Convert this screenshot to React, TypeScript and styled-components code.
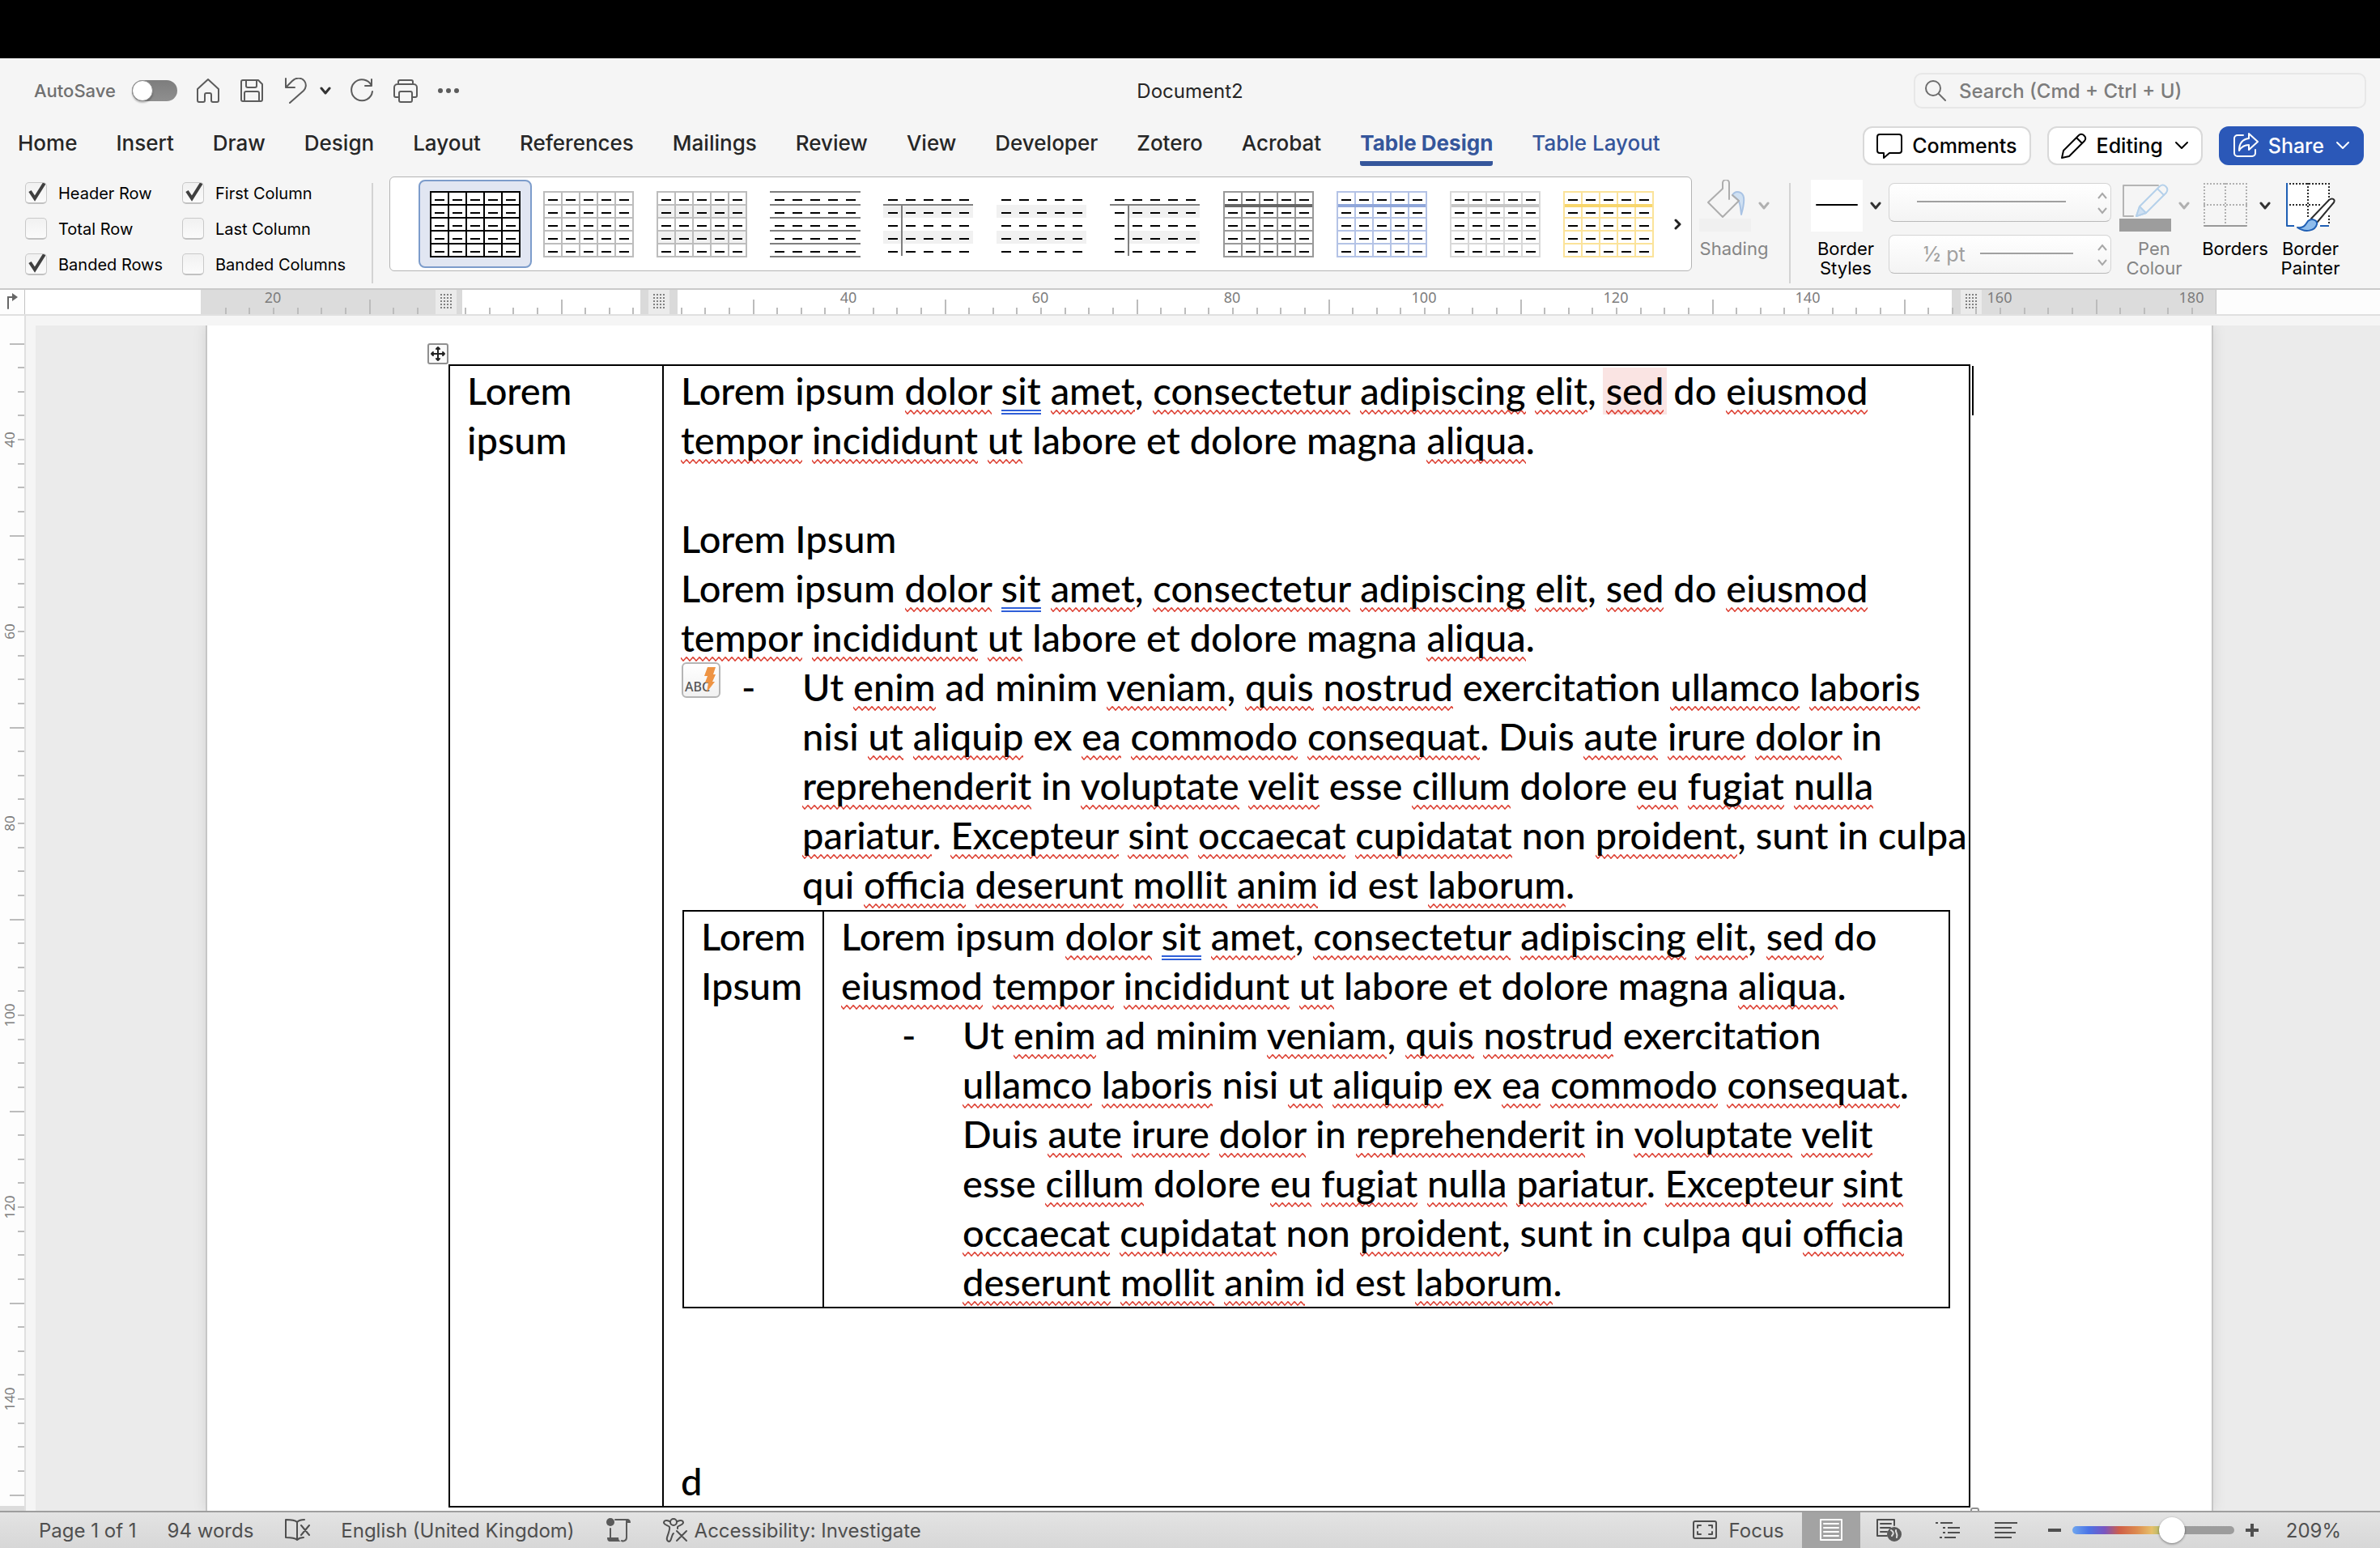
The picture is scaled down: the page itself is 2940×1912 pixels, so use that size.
import React from "react";
import styled, { createGlobalStyle, css } from "styled-components";

const UI = `Inter, Roboto, "Liberation Sans", sans-serif`;
const DOC = `Lato, "Open Sans", "Liberation Sans", sans-serif`;
const BLUE = "#35569b";
const LINE = 61;

const Global = createGlobalStyle`
  *, *::before, *::after { box-sizing: border-box; }
  body { margin: 0; background: #f5f5f5; font-family: ${UI}; }
  button, input, select { font: inherit; color: inherit; margin: 0; }
  button { border: 0; padding: 0; background: none; }
`;

const Window = styled.div`
  display: flex;
  flex-direction: column;
  height: 100vh;
  overflow: hidden;
  color: #1f1f1f;
`;

const ScreenEdge = styled.div`
  flex: none;
  height: 72px;
  background: #000;
`;

/* ---------- title bar ---------- */

const TitleBar = styled.header`
  flex: none;
  display: grid;
  grid-template-columns: 1fr auto 1fr;
  align-items: center;
  height: 80px;
  padding: 0 17px;
  font-size: 23px;
`;

const QuickAccess = styled.div`
  display: flex;
  align-items: center;
  gap: 22px;
  padding-left: 25px;
  color: #5c5c5c;
`;

const AutoSave = styled.label`
  display: flex;
  align-items: center;
  gap: 20px;
  font-size: 22px;
  font-weight: 500;
  color: #707070;
`;

const Toggle = styled.input`
  appearance: none;
  display: flex;
  width: 56px;
  height: 26px;
  border-radius: 13px;
  background: linear-gradient(#7d7d7d, #8f8f8f);
  &::before {
    content: "";
    width: 26px;
    height: 26px;
    border-radius: 50%;
    border: 1px solid #8a8a8a;
    background: #fff;
    box-shadow: 0 2px 2px rgba(0, 0, 0, 0.25);
  }
`;

const IconButton = styled.button`
  display: flex;
  align-items: center;
`;

const Pair = styled.div`
  display: flex;
  align-items: center;
  gap: 14px;
`;

const DocTitle = styled.h1`
  margin: 0;
  font-size: 24px;
  font-weight: 400;
  color: #262626;
`;

const SearchBox = styled.label`
  justify-self: end;
  display: flex;
  align-items: center;
  gap: 14px;
  width: 559px;
  height: 44px;
  padding: 0 12px;
  border: 2px solid #e7e7e7;
  border-radius: 10px;
  color: #6d6d6d;
`;

const SearchInput = styled.input`
  flex: 1;
  border: 0;
  outline: 0;
  background: none;
  font-size: 24px;
  font-weight: 500;
  &::placeholder { color: #7c7c7c; opacity: 1; }
`;

/* ---------- tabs ---------- */

const TabBar = styled.div`
  flex: none;
  display: flex;
  align-items: center;
  justify-content: space-between;
  height: 56px;
  padding: 0 20px 0 22px;
`;

const Tabs = styled.nav`
  display: flex;
  gap: 48px;
`;

const Tab = styled.button<{ $tone?: "context" | "active" }>`
  height: 50px;
  padding-bottom: 2px;
  border-bottom: 6px solid transparent;
  font-size: 26px;
  font-weight: ${(p) => (p.$tone === "active" ? 700 : 500)};
  color: ${(p) => (p.$tone ? BLUE : "#262626")};
  ${(p) =>
    p.$tone === "active" &&
    css`
      background: linear-gradient(${BLUE}, ${BLUE}) bottom / 100% 6px no-repeat border-box;
      border-radius: 3px;
    `}
`;

const Actions = styled.div`
  display: flex;
  gap: 20px;
`;

const ActionButton = styled.button<{ $primary?: boolean }>`
  display: flex;
  align-items: center;
  gap: 12px;
  height: 48px;
  padding: 0 15px;
  border: 2px solid ${(p) => (p.$primary ? "#2b58b8" : "#d9d9d9")};
  border-radius: 12px;
  background: ${(p) => (p.$primary ? "#2b58b8" : "#fff")};
  color: ${(p) => (p.$primary ? "#fff" : "#000")};
  font-size: 25px;
  font-weight: 500;
`;

/* ---------- ribbon ---------- */

const Ribbon = styled.section`
  flex: none;
  display: flex;
  align-items: flex-start;
  height: 150px;
  padding: 8px 50px 0 31px;
  border-bottom: 2px solid #cacaca;
`;

const Options = styled.div`
  display: grid;
  grid-template-columns: 194px 234px;
  grid-auto-rows: 44px;
`;

const Option = styled.label`
  display: flex;
  align-items: center;
  gap: 14px;
  padding-top: 1px;
  font-size: 20px;
  color: #000;
`;

const tick = `url("data:image/svg+xml,%3Csvg xmlns='http://www.w3.org/2000/svg' viewBox='0 0 27 27'%3E%3Cpath d='M6 11l6 9L24 1' fill='none' stroke='%23404040' stroke-width='4'/%3E%3C/svg%3E")`;

const Check = styled.input`
  appearance: none;
  width: 27px;
  height: 27px;
  border: 1px solid #c9c9c9;
  border-bottom: 2px solid #c2c2c2;
  border-radius: 5px;
  background: linear-gradient(#f1f1f1, #fbfbfb);
  &:checked { background: ${tick} center / 27px 27px no-repeat border-box, linear-gradient(#f1f1f1, #fbfbfb); }
`;

const Divider = styled.div`
  flex: none;
  width: 2px;
  height: 124px;
  margin-top: 10px;
  background: #d3d3d3;
`;

const Gallery = styled.div`
  flex: 1;
  display: flex;
  align-items: center;
  height: 117px;
  margin: 2px 9px 0 20px;
  padding-left: 35px;
  overflow: hidden;
  border: 1px solid #b4b4b4;
  border-radius: 6px;
  background: #fff;
`;

const StyleButton = styled.button<{ $selected?: boolean }>`
  flex: none;
  display: grid;
  place-items: center;
  width: 140px;
  height: 109px;
  border-radius: 8px;
  ${(p) =>
    p.$selected &&
    css`
      border: 2px solid #7c9ccb;
      background: #e1e6f2;
    `}
`;

const GalleryMore = styled.button`
  flex: 1;
  display: flex;
  justify-content: center;
`;

const ToolRow = styled.div<{ $gap: number }>`
  flex: none;
  display: flex;
  align-items: flex-start;
  gap: ${(p) => p.$gap}px;
`;

const ToolButton = styled.button<{ $dim?: boolean; $plain?: boolean }>`
  display: flex;
  flex-direction: column;
  align-items: center;
  gap: 9px;
  width: ${(p) => (p.$plain ? 72 : 86)}px;
  padding-top: 6px;
  font-size: 22px;
  line-height: 24px;
  color: ${(p) => (p.$dim ? "#858585" : "#000")};
`;

const ToolIcon = styled.span`
  display: flex;
  align-items: center;
  gap: 9px;
`;

const Fields = styled.div`
  display: grid;
  gap: 16px;
  width: 275px;
  padding-top: 10px;
`;

const Field = styled.label`
  display: grid;
  height: 48px;
  border: 1px solid #d4d4d4;
  border-bottom-color: #b9b9b9;
  border-radius: 7px;
  background: linear-gradient(#fff, #f4f4f4);
  & > * { grid-area: 1 / 1; }
  & > svg { pointer-events: none; }
`;

const FieldSelect = styled.select`
  appearance: none;
  width: 100%;
  height: 100%;
  padding: 0 42px;
  border: 0;
  background: none;
  font-size: 25px;
  color: #a0a0a0;
`;

/* ---------- rulers and canvas ---------- */

const Ruler = styled.div`
  flex: none;
  display: flex;
  position: relative;
  height: 32px;
  border-bottom: 2px solid #e0e0e0;
  background: #fdfdfd;
`;

const RulerPart = styled.div<{ $w: number; $bg: string; $edge?: boolean }>`
  flex: none;
  width: ${(p) => p.$w}px;
  background: ${(p) => p.$bg};
  border-right: ${(p) => (p.$edge ? "1px solid #c4c4c4" : "0")};
`;

const Grip = styled.div`
  flex: none;
  display: grid;
  place-items: center;
  width: 26px;
  background: #ebebeb;
`;

const RulerScale = styled.svg`
  position: absolute;
  left: 0;
  top: 0;
  overflow: visible;
  font-family: "Noto Sans", "DejaVu Sans", sans-serif;
  font-size: 18px;
`;

const Workspace = styled.main`
  flex: 1;
  min-height: 0;
  display: flex;
`;

const SideRuler = styled.div`
  flex: none;
  width: 32px;
  border-right: 2px solid #e0e0e0;
  background: linear-gradient(#fdfdfd, #fdfdfd) top / 100% calc(100% - 6px) no-repeat, #dcdcdc;
  font-family: "Noto Sans", "DejaVu Sans", sans-serif;
  font-size: 17px;
  overflow: hidden;
`;

const Canvas = styled.div`
  flex: 1;
  display: flex;
  justify-content: center;
  margin: 12px 0 0 12px;
  padding-left: 4px;
  overflow: hidden;
  background: #ebebeb;
`;

const Page = styled.article`
  flex: none;
  width: 2480px;
  padding: 48px 0 0 298px;
  border: 2px solid #c6c6c6;
  border-width: 0 2px;
  background: #fff;
  box-shadow: 0 0 16px rgba(0, 0, 0, 0.1);
`;

const TableFrame = styled.div`
  position: relative;
  width: 1880px;
`;

const DocTable = styled.table`
  width: 100%;
  table-layout: fixed;
  border-collapse: collapse;
  font-family: ${DOC};
  font-size: 47px;
  font-weight: 500;
  line-height: ${LINE}px;
  color: #000;
`;

const NestedFrame = styled.div`
  width: 1566px;
  margin: 1px 0 0 2px;
`;

const Cell = styled.td`
  padding: 0 0 0 21px;
  border: 2px solid #000;
  vertical-align: top;
  white-space: nowrap;
`;

const Line = styled.p`
  margin: 0;
  min-height: ${LINE}px;
`;

const List = styled.ul`
  margin: 0;
  padding: 0;
  list-style: none;
`;

const Item = styled.li`
  position: relative;
  display: flex;
`;

const Dash = styled.span`
  flex: none;
  width: 150px;
  padding-left: 75px;
`;

const wave = `url("data:image/svg+xml,%3Csvg xmlns='http://www.w3.org/2000/svg' width='8' height='6'%3E%3Cpath d='M-1 0.5L3 5.2L7 0.8L9 3.2' fill='none' stroke='%23dc3a2c' stroke-width='1.5'/%3E%3C/svg%3E")`;

const Misspelt = styled.span<{ $spoken?: boolean }>`
  padding-bottom: 2px;
  background: ${wave} left bottom / 8px 6px repeat-x;
  ${(p) => p.$spoken && css`box-shadow: -4px 0 #fae4e3, 4px 0 #fae4e3; background-color: #fae4e3;`}
`;

const Grammar = styled.span`
  padding-bottom: 2px;
  background: linear-gradient(#2f5fd8 0 2px, transparent 2px 4px, #2f5fd8 4px 6px) left bottom / 100% 6px no-repeat;
`;

const MoveHandle = styled.button`
  position: absolute;
  left: -26px;
  top: -26px;
  width: 26px;
  height: 26px;
  display: grid;
  place-items: center;
  border: 2px solid #8f8f8f;
  border-radius: 3px;
  background: #fafafa;
`;

const ResizeHandle = styled.span`
  position: absolute;
  left: 100%;
  top: 100%;
  width: 11px;
  height: 11px;
  border: 2px solid #8f8f8f;
  border-radius: 3px;
  background: #fff;
`;

const Caret = styled.span`
  position: absolute;
  right: -4px;
  top: 2px;
  width: 2px;
  height: ${LINE}px;
  background: #000;
`;

const AutoCorrect = styled.button`
  position: absolute;
  left: 1px;
  top: 0;
  width: 48px;
  height: 44px;
  border: 2px solid #b5b5b5;
  border-radius: 6px;
  background: linear-gradient(#fff, #f1f1f1);
  line-height: 0;
`;

/* ---------- status bar ---------- */

const StatusBar = styled.footer`
  flex: none;
  display: flex;
  justify-content: space-between;
  height: 46px;
  padding: 0 48px;
  border-top: 2px solid #9e9e9e;
  background: linear-gradient(#e3e3e3, #d7d7d7);
  font-size: 24px;
  color: #4f4f4f;
`;

const StatusSide = styled.div<{ $gap: number }>`
  display: flex;
  align-items: center;
  gap: ${(p) => p.$gap}px;
`;

const StatusButton = styled.button`
  display: flex;
  align-items: center;
  gap: 8px;
`;

const ViewButton = styled.button<{ $on?: boolean }>`
  display: grid;
  place-items: center;
  width: 72px;
  height: 44px;
  background: ${(p) => (p.$on ? "#a3a3a3" : "none")};
`;

const Zoom = styled.input`
  appearance: none;
  width: 200px;
  height: 32px;
  background: none;
  &::-webkit-slider-runnable-track {
    height: 10px;
    border-radius: 5px;
    background: linear-gradient(90deg, #6fa6ee 0, #4b74e6 20px, #7a55c0 40px, #cf5f48 58px, #dd8c50 80px, #e6bf6a 98px, #8fb86a 116px, #9c9c9c 117px);
  }
  &::-webkit-slider-thumb {
    appearance: none;
    width: 32px;
    height: 32px;
    margin-top: -11px;
    border-radius: 50%;
    background: #fff;
    box-shadow: 0 1px 3px rgba(0, 0, 0, 0.45);
  }
`;

/* ---------- drawings ---------- */

type G = { w?: number; h?: number; sw?: number; color?: string; children: React.ReactNode };
const Glyph = ({ w = 32, h = 32, sw = 2, color = "currentColor", children }: G) => (
  <svg width={w} height={h} viewBox={`0 0 ${w} ${h}`} fill="none" stroke={color} strokeWidth={sw} strokeLinecap="round" strokeLinejoin="round" aria-hidden="true">
    {children}
  </svg>
);

const Chevron = ({ color = "#333", sw = 3 }: { color?: string; sw?: number }) => (
  <Glyph w={14} h={12} sw={sw} color={color}><path d="M2 3l5 6 5-6" /></Glyph>
);

type Look = { line: string; head?: string; mode?: "grid" | "rows" | "head" | "none"; band?: boolean; col?: boolean };

const Thumb = ({ line, head, mode = "grid", band, col }: Look) => {
  const steps = [0, 1, 2, 3, 4, 5];
  const x0 = col ? 23 : 0;
  return (
    <svg width="112" height="82" viewBox="0 0 112 82" aria-hidden="true">
      {mode !== "none" && mode !== "head" && <rect width="112" height="82" fill="#fff" />}
      {band && [17, 49].map((y) => <rect key={y} x={x0} y={y} width={111 - x0} height="16" fill="#f1f1f1" />)}
      {(mode === "grid" || mode === "rows") &&
        steps.map((i) => <path key={i} d={`M0 ${1 + 16 * i}H112`} stroke={line} strokeWidth="2" />)}
      {mode === "grid" && steps.map((i) => <path key={i} d={`M${1 + 22 * i} 0V82`} stroke={line} strokeWidth="2" />)}
      {mode === "grid" && head && <path d="M2 18H110" stroke={head} strokeWidth="4" />}
      {mode === "head" && <path d="M0 17H111M23 17V80" stroke={line} strokeWidth="2" />}
      {[11, 27, 43, 59, 75].map((y) => (
        <path key={y} d={`M6 ${y}H106`} stroke="#000" strokeWidth="2" strokeDasharray="12 10" />
      ))}
    </svg>
  );
};

const looks: Look[] = [
  { line: "#000" },
  { line: "#bdbdbd" },
  { line: "#bdbdbd", band: true },
  { line: "#7f7f7f", mode: "rows" },
  { line: "#7f7f7f", mode: "head", band: true },
  { line: "#7f7f7f", mode: "none", band: true },
  { line: "#7f7f7f", mode: "head", band: true, col: true },
  { line: "#999", head: "#666" },
  { line: "#b4c3e6", head: "#8fa6da" },
  { line: "#d9d9d9", head: "#c6c6c6" },
  { line: "#fbe39a", head: "#f8d66c" },
];

const range = (a: number, b: number) => Array.from({ length: b - a + 1 }, (_, i) => a + i);
const MM20 = 237;

const HorizontalScale = () => (
  <RulerScale width="2760" height="30" aria-hidden="true">
    {range(-10, 72)
      .filter((k) => k < -1 || (k > -1 && k < 8) || k > 8)
      .map((k) => {
        const x = Math.round(575 + (k * MM20) / 8);
        const long = Math.abs(k % 8) === 4;
        return <path key={k} d={`M${x} ${long ? 12 : 22}V30`} stroke="#bcbcbc" strokeWidth="2" />;
      })}
    {[-1, 2, 3, 4, 5, 6, 7, 8, 9].map((n) => (
      <text key={n} x={574 + n * MM20} y="16" textAnchor="middle" fill="#7d7d7d">{Math.abs(n) * 20}</text>
    ))}
  </RulerScale>
);

const VerticalScale = () => (
  <svg width="30" height="1500" aria-hidden="true">
    {range(12, 60).map((k) => {
      const y = Math.round(69 + (k * MM20) / 8) - 390;
      return <path key={k} d={`M${k % 8 === 4 ? 12 : 22} ${y}H30`} stroke="#bcbcbc" strokeWidth="2" />;
    })}
    {[2, 3, 4, 5, 6, 7].map((n) => {
      const y = 69 + n * MM20 - 390;
      return <text key={n} x="18" y={y} transform={`rotate(-90 18 ${y})`} textAnchor="middle" fill="#7d7d7d">{n * 20}</text>;
    })}
  </svg>
);

const GripDots = () => (
  <svg width="16" height="20" aria-hidden="true">
    {[1, 5, 9, 13, 17].map((y) => <path key={y} d={`M1 ${y}H15`} stroke="#808080" strokeWidth="2" strokeDasharray="2 2" />)}
  </svg>
);

const Spinner = ({ from, to }: { from: number; to: number }) => (
  <svg width="273" height="46" fill="none" strokeWidth="2" aria-hidden="true">
    <path d={`M${from} 22H${to}`} stroke="#a0a0a0" />
    <path d="M258 18l5-6 5 6M258 30l5 6 5-6" stroke="#a8a8a8" />
  </svg>
);

/* ---------- document text ---------- */

/* ~word~ is a spelling mark, =word= a grammar mark, ^word^ the word in focus */
const marked = (text: string) =>
  text.split(/(~[^~]+~|=[^=]+=|\^[^^]+\^)/).map((part, i) => {
    const word = part.slice(1, -1);
    if (part[0] === "~") return <Misspelt key={i}>{word}</Misspelt>;
    if (part[0] === "^") return <Misspelt key={i} $spoken>{word}</Misspelt>;
    if (part[0] === "=") return <Grammar key={i}>{word}</Grammar>;
    return part;
  });

const Lines = ({ rows }: { rows: string[] }) => <>{rows.map((r, i) => <Line key={i}>{marked(r)}</Line>)}</>;

const LOREM = "~consectetur~ ~adipiscing~ ~elit~,";
const tail = "~tempor~ ~incididunt~ ~ut~ labore et dolore magna ~aliqua~.";

const outerTop = [
  `Lorem ipsum ~dolor~ =sit= ~amet~, ${LOREM} ^sed^ do ~eiusmod~`,
  tail,
  "",
  "Lorem Ipsum",
  `Lorem ipsum ~dolor~ =sit= ~amet~, ${LOREM} ~sed~ do ~eiusmod~`,
  tail,
];
const outerItem = [
  "Ut ~enim~ ad minim ~veniam~, ~quis~ ~nostrud~ exercitation ~ullamco~ ~laboris~",
  "nisi ~ut~ ~aliquip~ ex ~ea~ ~commodo~ ~consequat~. Duis ~aute~ ~irure~ ~dolor~ in",
  "~reprehenderit~ in ~voluptate~ ~velit~ esse ~cillum~ dolore ~eu~ ~fugiat~ ~nulla~",
  "~pariatur~. ~Excepteur~ ~sint~ ~occaecat~ ~cupidatat~ non ~proident~, sunt in culpa",
  "qui ~officia~ ~deserunt~ ~mollit~ ~anim~ id est ~laborum~.",
];
const innerTop = [`Lorem ipsum ~dolor~ =sit= ~amet~, ${LOREM} ~sed~ do`, `~eiusmod~ ${tail}`];
const innerItem = [
  "Ut ~enim~ ad minim ~veniam~, ~quis~ ~nostrud~ exercitation",
  "~ullamco~ ~laboris~ nisi ~ut~ ~aliquip~ ex ~ea~ ~commodo~ ~consequat~.",
  "Duis ~aute~ ~irure~ ~dolor~ in ~reprehenderit~ in ~voluptate~ ~velit~",
  "esse ~cillum~ dolore ~eu~ ~fugiat~ ~nulla~ ~pariatur~. ~Excepteur~ ~sint~",
  "~occaecat~ ~cupidatat~ non ~proident~, sunt in culpa qui ~officia~",
  "~deserunt~ ~mollit~ ~anim~ id est ~laborum~.",
];

const tabs = ["Home", "Insert", "Draw", "Design", "Layout", "References", "Mailings", "Review", "View", "Developer", "Zotero", "Acrobat"];
const options: [string, boolean][] = [
  ["Header Row", true], ["First Column", true],
  ["Total Row", false], ["Last Column", false],
  ["Banded Rows", true], ["Banded Columns", false],
];

export default function App() {
  return (
    <Window>
      <Global />
      <ScreenEdge />
      <TitleBar>
        <QuickAccess>
          <AutoSave>AutoSave<Toggle type="checkbox" role="switch" /></AutoSave>
          <IconButton aria-label="Home">
            <Glyph><path d="M3 14L16 2l13 12v14a2 2 0 0 1-2 2h-5a2 2 0 0 1-2-2v-7a2 2 0 0 0-2-2h-4a2 2 0 0 0-2 2v7a2 2 0 0 1-2 2H5a2 2 0 0 1-2-2z" /></Glyph>
          </IconButton>
          <IconButton aria-label="Save">
            <Glyph><path d="M5 3h19l5 5v19a2 2 0 0 1-2 2H5a2 2 0 0 1-2-2V5a2 2 0 0 1 2-2zM9 3v7a2 2 0 0 0 2 2h9a2 2 0 0 0 2-2V3M7 29V19a2 2 0 0 1 2-2h14a2 2 0 0 1 2 2v10" /></Glyph>
          </IconButton>
          <Pair>
            <IconButton aria-label="Undo">
              <Glyph><path d="M4 1v11h11M4 12l8-8c5-5 12-4 15 0s2 9-1 12L9 31" /></Glyph>
            </IconButton>
            <IconButton aria-label="Undo history"><Chevron /></IconButton>
          </Pair>
          <IconButton aria-label="Redo">
            <Glyph><path d="M28 2v8h-8M28 10A13 13 0 1 0 29 17" /></Glyph>
          </IconButton>
          <IconButton aria-label="Print">
            <Glyph><path d="M8 24H4a2 2 0 0 1-2-2V12a4 4 0 0 1 4-4h20a4 4 0 0 1 4 4v10a2 2 0 0 1-2 2h-4M7 8V5a2 2 0 0 1 2-2h14a2 2 0 0 1 2 2v3M10 17h12a2 2 0 0 1 2 2v9a2 2 0 0 1-2 2H10a2 2 0 0 1-2-2v-9a2 2 0 0 1 2-2z" /></Glyph>
          </IconButton>
          <IconButton aria-label="More">
            <Glyph><g fill="currentColor" stroke="none"><circle cx="5" cy="16" r="3" /><circle cx="15" cy="16" r="3" /><circle cx="25" cy="16" r="3" /></g></Glyph>
          </IconButton>
        </QuickAccess>
        <DocTitle>Document2</DocTitle>
        <SearchBox>
          <Glyph w={26} h={28}><circle cx="10" cy="11" r="9" /><path d="M17 18l8 8" /></Glyph>
          <SearchInput type="search" aria-label="Search" placeholder="Search (Cmd + Ctrl + U)" />
        </SearchBox>
      </TitleBar>

      <TabBar>
        <Tabs>
          {tabs.map((t) => <Tab key={t}>{t}</Tab>)}
          <Tab $tone="active">Table Design</Tab>
          <Tab $tone="context">Table Layout</Tab>
        </Tabs>
        <Actions>
          <ActionButton>
            <Glyph><path d="M4 2h24a3 3 0 0 1 3 3v17a3 3 0 0 1-3 3H16l-7 6v-6H4a3 3 0 0 1-3-3V5a3 3 0 0 1 3-3z" /></Glyph>
            Comments
          </ActionButton>
          <ActionButton>
            <Glyph><path d="M1 31l2-9L22 3a5 5 0 0 1 7 7L10 29zM19 6l7 7" /></Glyph>
            Editing
            <Glyph w={20} h={14}><path d="M4 3l7 7 7-7" /></Glyph>
          </ActionButton>
          <ActionButton $primary>
            <Glyph><path d="M13 3H6a4 4 0 0 0-4 4v18a4 4 0 0 0 4 4h18a4 4 0 0 0 4-4v-4M20 1l11 10-11 10v-6c-6 0-9 2-12 7 0-9 4-14 12-15z" /></Glyph>
            Share
            <Glyph w={20} h={14}><path d="M4 3l7 7 7-7" /></Glyph>
          </ActionButton>
        </Actions>
      </TabBar>

      <Ribbon>
        <Options>
          {options.map(([name, on]) => (
            <Option key={name}><Check type="checkbox" defaultChecked={on} />{name}</Option>
          ))}
        </Options>
        <Divider />
        <Gallery>
          {looks.map((look, i) => (
            <StyleButton key={i} $selected={i === 0} aria-label={`Table style ${i + 1}`}><Thumb {...look} /></StyleButton>
          ))}
          <GalleryMore aria-label="More styles">
            <Glyph w={10} h={16} sw={3} color="#222"><path d="M2 3l5 5-5 5" /></Glyph>
          </GalleryMore>
        </Gallery>
        <ToolRow $gap={25}>
          <ToolButton $dim>
            <ToolIcon>
              <Glyph w={64} h={64} color="#adadad">
                <path d="M0 48h64v16H0z" fill="#f0f0f0" stroke="none" />
                <path d="M41 19c4-7 13-4 14 3 1 7-1 14-3 21-1-8-1-14-4-18z" fill="#cfe0f2" stroke="#a9c3e4" />
                <path d="M37 24V4a4 4 0 0 0-8 0v7L11 28l18 18 20-20-8-7" />
              </Glyph>
              <Chevron color="#b0b0b0" />
            </ToolIcon>
            Shading
          </ToolButton>
          <Divider />
          <ToolRow $gap={10}>
            <ToolButton>
              <ToolIcon>
                <Glyph w={64} h={64} color="#000"><path d="M0 0h64v64H0z" fill="#fff" stroke="none" /><path d="M7 31h50" /></Glyph>
                <Chevron />
              </ToolIcon>
              <span>Border<br />Styles</span>
            </ToolButton>
            <Fields>
              <Field>
                <FieldSelect aria-label="Line style"><option></option></FieldSelect>
                <Spinner from={34} to={218} />
              </Field>
              <Field>
                <FieldSelect aria-label="Line weight"><option>½ pt</option></FieldSelect>
                <Spinner from={112} to={227} />
              </Field>
            </Fields>
            <ToolRow $gap={14}>
              <ToolButton $dim>
                <ToolIcon>
                  <Glyph w={64} h={64} color="#b4b4b4">
                    <path d="M0 48h64v16H0z" fill="#9d9d9d" stroke="none" />
                    <path d="M48 7H5v38h12" />
                    <g stroke="#b4d0ea"><path d="M21 45l4-12L50 8c5-4 12 2 8 8L33 41z" fill="#f5f5f5" /><path d="M21 45l4-12 8 8z" fill="#cfe0f2" /><path d="M47 11l8 8" /></g>
                  </Glyph>
                  <Chevron color="#b0b0b0" />
                </ToolIcon>
                <span>Pen<br />Colour</span>
              </ToolButton>
              <ToolButton>
                <ToolIcon>
                  <Glyph w={64} h={64} color="#b0b0b0">
                    <g strokeDasharray="2 2" strokeLinecap="butt"><path d="M4 5h54M5 4v53M57 4v53M31 4v53M4 31h54" /></g>
                    <path d="M5 57h52" stroke="#999" />
                  </Glyph>
                  <Chevron />
                </ToolIcon>
                Borders
              </ToolButton>
              <ToolButton $plain>
                <ToolIcon>
                  <Glyph w={64} h={64} color="#2b2b2b">
                    <path d="M3 5h52v52H3z" fill="#fff" stroke="none" />
                    <g strokeDasharray="2 2" strokeLinecap="butt"><path d="M6 5h50M55 4v28M55 44v12M29 4v44M6 31h38" /></g>
                    <path d="M3 4v53h9M44 57h11" stroke="#1f5fb4" strokeLinecap="butt" />
                    <path d="M33 48L55 25c4-3 8-1 6 3L40 53z" fill="#fff" />
                    <path d="M16 59c9 1 10-4 13-8 5-4 12-1 11 4-2 8-14 11-24 4z" fill="#8ebcec" stroke="#1f5fb4" />
                  </Glyph>
                </ToolIcon>
                <span>Border<br />Painter</span>
              </ToolButton>
            </ToolRow>
          </ToolRow>
        </ToolRow>
      </Ribbon>

      <Ruler>
        <RulerPart $w={31} $bg="#fdfdfd" $edge>
          <Glyph w={30} h={30} color="#666"><path d="M10 23V9h8" strokeLinejoin="miter" /><path d="M15 4l7 5-7 5z" fill="#666" stroke="none" /></Glyph>
        </RulerPart>
        <RulerPart $w={217} $bg="#fff" />
        <RulerPart $w={290} $bg="#dcdcdc" />
        <Grip><GripDots /></Grip>
        <RulerPart $w={7} $bg="#dadada" />
        <RulerPart $w={220} $bg="#fff" />
        <RulerPart $w={10} $bg="#dadada" />
        <Grip><GripDots /></Grip>
        <RulerPart $w={10} $bg="#dadada" />
        <RulerPart $w={1574} $bg="#fff" />
        <RulerPart $w={11} $bg="#dadada" />
        <Grip><GripDots /></Grip>
        <RulerPart $w={290} $bg="#dcdcdc" $edge />
        <HorizontalScale />
      </Ruler>

      <Workspace>
        <SideRuler><VerticalScale /></SideRuler>
        <Canvas>
          <Page>
            <TableFrame>
              <MoveHandle aria-label="Move table">
                <Glyph w={20} h={20} color="#222"><path d="M10 2v16M2 10h16M8 4l2-2 2 2M8 16l2 2 2-2M4 8l-2 2 2 2M16 8l2 2-2 2" /></Glyph>
              </MoveHandle>
              <DocTable>
                <colgroup><col width="264" /><col /></colgroup>
                <tbody>
                  <tr>
                    <Cell><Lines rows={["Lorem", "ipsum"]} /></Cell>
                    <Cell>
                      <Lines rows={outerTop} />
                      <List>
                        <Item>
                          <AutoCorrect aria-label="AutoCorrect options">
                            <svg width="44" height="40" aria-hidden="true">
                              <text x="2" y="34" fontFamily="Noto Sans" fontSize="16" fill="#555">ABC</text>
                              <path d="M30 4h10l-3 9h3l-4 9h3l-10 13 2-12h-4l3-8h-4z" fill="#ee9444" />
                            </svg>
                          </AutoCorrect>
                          <Dash>-</Dash>
                          <div><Lines rows={outerItem} /></div>
                        </Item>
                      </List>
                      <NestedFrame>
                        <DocTable>
                          <colgroup><col width="173" /><col /></colgroup>
                          <tbody>
                            <tr>
                              <Cell><Lines rows={["Lorem", "Ipsum"]} /></Cell>
                              <Cell>
                                <Lines rows={innerTop} />
                                <List><Item><Dash>-</Dash><div><Lines rows={innerItem} /></div></Item></List>
                              </Cell>
                            </tr>
                          </tbody>
                        </DocTable>
                      </NestedFrame>
                      <Lines rows={["", "", "", "d"]} />
                    </Cell>
                  </tr>
                </tbody>
              </DocTable>
              <Caret />
              <ResizeHandle />
            </TableFrame>
          </Page>
        </Canvas>
      </Workspace>

      <StatusBar>
        <StatusSide $gap={38}>
          <span>Page 1 of 1</span>
          <span>94 words</span>
          <StatusButton aria-label="Proofing">
            <Glyph><path d="M16 28V6c-3-3-8-3-14-3v22c6 0 11 0 14 3zc3-3 5-3 8-3M16 6c3-3 6-3 9-3M21 10l10 12M31 10L21 22" /></Glyph>
          </StatusButton>
          <StatusButton>English (United Kingdom)</StatusButton>
          <StatusButton aria-label="Macro recording">
            <Glyph color="#5a5a5a"><circle cx="6" cy="6" r="5" fill="#5a5a5a" stroke="none" /><path d="M6 14v11M12 3h14v22c0 4-4 5-6 4" /><path d="M2 25h14c0 3 1 4 3 5H6c-3 0-4-2-4-5zM26 2c4 0 5 2 5 5h-5z" fill="#5a5a5a" stroke="none" /></Glyph>
          </StatusButton>
          <StatusButton>
            <Glyph><circle cx="14" cy="6" r="4" /><path d="M9 5C5 3 2 4 2 7c1 3 6 3 7 5s-1 7-3 13c-1 4 2 6 4 4 2-3 2-8 4-9M19 5c4-2 7-1 7 2-1 3-6 3-7 5v2M18 17l12 12M30 17L18 29" /></Glyph>
            Accessibility: Investigate
          </StatusButton>
        </StatusSide>
        <StatusSide $gap={34}>
          <StatusSide $gap={16}>
            <StatusSide $gap={22}>
              <StatusButton>
                <Glyph w={40} h={26}><path d="M6 2h24a2 2 0 0 1 2 2v17a2 2 0 0 1-2 2H6a2 2 0 0 1-2-2V4a2 2 0 0 1 2-2zM9 10V7h4M23 7h4v3M27 15v3h-4M13 18H9v-3" /></Glyph>
                Focus
              </StatusButton>
              <StatusSide $gap={0}>
                <ViewButton $on aria-label="Print layout">
                  <Glyph w={28} h={28} color="#fff"><path d="M1 1h26v25H1zM5 6h18M5 11h18M5 16h18M5 21h18" /></Glyph>
                </ViewButton>
                <ViewButton aria-label="Web layout">
                  <Glyph w={34} h={30}><path d="M14 22H2V2h21v7M6 7h13M6 12h12M6 17h8" /><circle cx="23" cy="20" r="8" fill="#5a5a5a" stroke="#5a5a5a" /><path d="M19 15c3 2 4 4 1 7M25 15c-1 3 3 4 1 9" stroke="#dedede" /></Glyph>
                </ViewButton>
                <ViewButton aria-label="Outline">
                  <Glyph w={30} h={24}><path d="M0 3h3M6 3h15M9 9h3M15 9h15M9 15h3M15 15h15M5 21h3M11 21h14" strokeLinecap="butt" /></Glyph>
                </ViewButton>
                <ViewButton aria-label="Draft">
                  <Glyph w={28} h={24}><path d="M0 3h28M0 9h21M0 15h26M0 21h21" strokeLinecap="butt" /></Glyph>
                </ViewButton>
              </StatusSide>
            </StatusSide>
            <StatusSide $gap={14}>
              <StatusButton aria-label="Zoom out"><Glyph w={16} h={16} sw={4}><path d="M0 8h16" strokeLinecap="butt" /></Glyph></StatusButton>
              <Zoom type="range" aria-label="Zoom" min={0} max={100} defaultValue={64} />
              <StatusButton aria-label="Zoom in"><Glyph w={16} h={16} sw={4}><path d="M0 8h16M8 0v16" strokeLinecap="butt" /></Glyph></StatusButton>
            </StatusSide>
          </StatusSide>
          <StatusButton>209%</StatusButton>
        </StatusSide>
      </StatusBar>
    </Window>
  );
}
